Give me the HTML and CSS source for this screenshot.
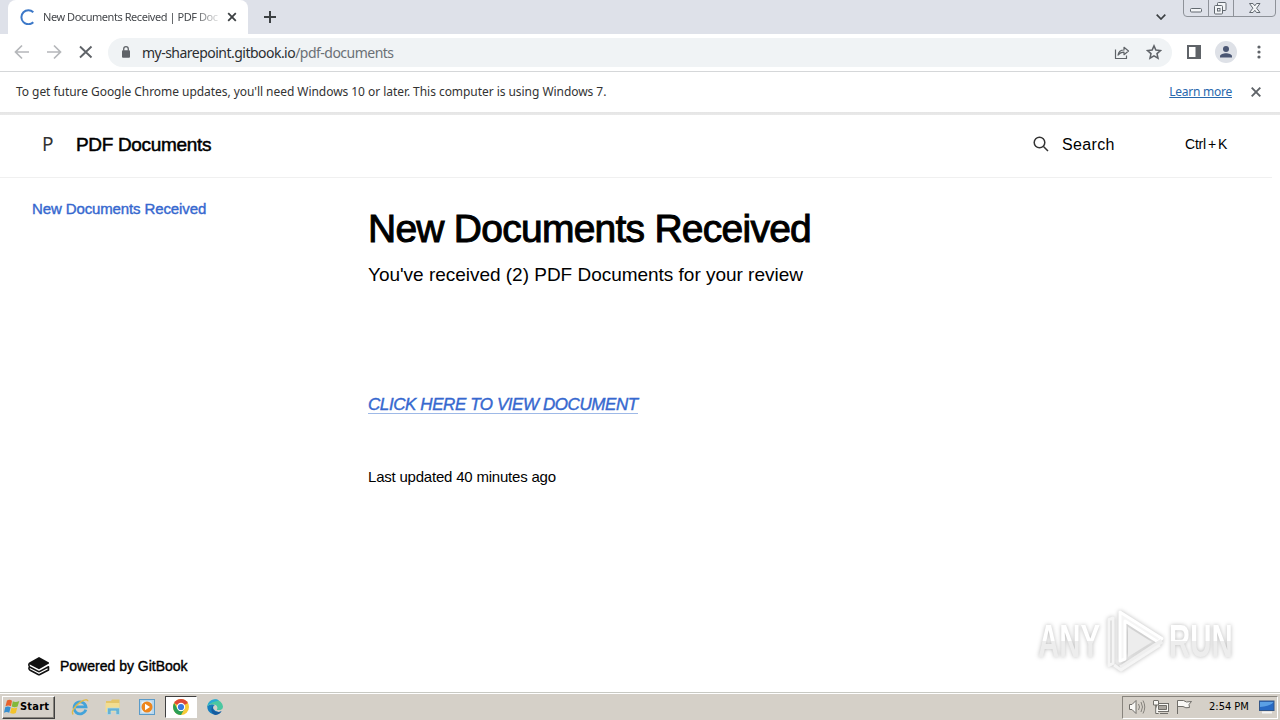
FILE: index.html
```html
<!DOCTYPE html>
<html lang="en">
<head>
<meta charset="utf-8">
<title>New Documents Received | PDF Documents</title>
<link rel="stylesheet" href="styles.css">
</head>
<body>
<div class="screen">
  <header class="tabstrip">
    <div class="tab">
      <svg class="spinner" width="16" height="16" viewBox="0 0 16 16"><path d="M13.3 3.2A7 7 0 1 0 13.3 13.2" fill="none" stroke="#3c78c8" stroke-width="2"/></svg>
      <span class="tab-title">New Documents Received | PDF Doc</span>
      <svg class="tab-close" width="10" height="10" viewBox="0 0 10 10"><path d="M1.2 1.2l7.6 7.6M8.8 1.2L1.2 8.8" stroke="#3c4043" stroke-width="1.8"/></svg>
    </div>
    <svg class="new-tab" width="12" height="12" viewBox="0 0 12 12"><path d="M6 0v12M0 6h12" stroke="#3c4043" stroke-width="2"/></svg>
    <svg class="tab-search" width="10" height="6" viewBox="0 0 10 6"><path d="M.7 .7L5 5 9.300.7" fill="none" stroke="#3c4043" stroke-width="1.7"/></svg>
    <svg class="window-buttons" width="93" height="17" viewBox="0 0 93 17">
      <path d="M.5 0v13q0 3.500 3.500 3.500h85q3.500 0 3.500-3.500V0M25.500 0v16M50.500 0v16" fill="none" stroke="#8e9299"/>
      <g fill="#f3f5f7" stroke="#626970"><rect x="7.500" y="8.500" width="11" height="3.500" rx="1"/><rect x="34.500" y="2.500" width="8.500" height="8" rx="1"/><rect x="31.500" y="5.500" width="8" height="8.500" rx="1"/><rect x="34.500" y="8.500" width="2.500" height="2.500"/>
      <path d="M66.500 3.500h3.500l1.800 2.300 1.700-2.300h3.500l-3.400 4.700 3.400 4.300h-3.500l-1.700-2.200-1.800 2.200h-3.500l3.400-4.300z"/></g>
    </svg>
  </header>

  <div class="toolbar">
    <svg class="nav" width="80" height="16" viewBox="0 0 80 16"><g fill="none" stroke-width="1.700"><path d="M15 8H2M8 1.500L1.500 8 8 14.500M33 8h13M40 1.500L46.500 8 40 14.500" stroke="#b5b7ba"/><path d="M66 2.500l11.500 11M77.500 2.500L66 13.500" stroke="#5f6368" stroke-width="1.900"/></g></svg>
    <div class="omnibox">
      <svg class="lock" width="10" height="12" viewBox="0 0 10 12"><rect x="1" y="4.300" width="8" height="7.500" rx="1" fill="#5f6368"/><path d="M2.700 4.800V3a2.300 2.300 0 0 1 4.600 0v1.800" fill="none" stroke="#5f6368" stroke-width="1.300"/></svg>
      <span class="url">my-sharepoint.gitbook.io<span class="url-path">/pdf-documents</span></span>
      <svg class="share" width="16" height="15" viewBox="0 0 16 15"><path d="M1.500 4.500v9h11v-3M4 10c.7-3.700 2.800-5 6-5V2.300L14.500 6 10 9.700V7.200C7.400 7.200 5.700 7.900 4 10z" fill="none" stroke="#5f6368" stroke-width="1.200" stroke-linejoin="round"/></svg>
      <svg class="star" width="16" height="16" viewBox="0 0 24 24"><path d="M12 2.800l2.800 6.300 6.900.7-5.200 4.600 1.500 6.800-6-3.500-6 3.500 1.500-6.800-5.200-4.600 6.900-.7z" fill="none" stroke="#5f6368" stroke-width="2.300"/></svg>
    </div>
    <svg class="panel" width="14" height="14" viewBox="0 0 14 14"><path d="M0 0h14v14H0zM2 2v10h6.500V2z" fill="#5f6368" fill-rule="evenodd"/></svg>
    <svg class="profile" width="22" height="22" viewBox="0 0 22 22"><circle cx="11" cy="11" r="11" fill="#dee1e7"/><circle cx="11" cy="8" r="3" fill="#4a5673"/><path d="M5 16.500v-1.300c0-2 3.500-3 6-3s6 1 6 3v1.300z" fill="#4a5673"/></svg>
    <svg class="more" width="4" height="14" viewBox="0 0 4 14"><g fill="#5f6368"><circle cx="2" cy="2" r="1.600"/><circle cx="2" cy="7" r="1.600"/><circle cx="2" cy="12" r="1.600"/></g></svg>
  </div>

  <div class="infobar">
    <span class="notice">To get future Google Chrome updates, you'll need Windows 10 or later. This computer is using Windows 7.</span>
    <a class="learn">Learn more</a>
    <svg class="dismiss" width="10" height="10" viewBox="0 0 10 10"><path d="M.7 .7l8.600 8.600M9.300.7L.7 9.300" stroke="#5f6368" stroke-width="1.900"/></svg>
  </div>

  <main class="page">
    <div class="site-header">
      <span class="site-icon">P</span>
      <span class="site-title">PDF Documents</span>
      <svg class="search-icon" width="16" height="16" viewBox="0 0 16 16"><circle cx="6.500" cy="6.500" r="5.300" fill="none" stroke="#333" stroke-width="1.500"/><path d="M10.500 10.500l4.500 4.500" stroke="#333" stroke-width="1.500"/></svg>
      <span class="search-label">Search</span>
      <span class="shortcut">Ctrl<span class="plus">+</span>K</span>
    </div>
    <div class="body">
      <nav class="sidebar">
        <a class="side-link">New Documents Received</a>
        <div class="powered">
          <svg width="22" height="20" viewBox="0 0 22 20"><path d="M.8 6.800L11 1l10 5.500v1L11 13.300.8 8z" fill="#111"/><path d="M1.200 7.500c-.8 2-.2 3 1 3.700l8 4.200q.8.400 1.600 0l8.700-4.600v3.200l-8.700 4.500q-.8.400-1.600 0l-8-4.200c-1.300-.8-1.600-2-.8-3.200" fill="none" stroke="#111" stroke-width="1.600" stroke-linejoin="round"/></svg>
          <span class="powered-text">Powered by GitBook</span>
        </div>
      </nav>
      <article class="content">
        <h1 class="title">New Documents Received</h1>
        <p class="lead">You've received (2) PDF Documents for your review</p>
        <a class="cta">CLICK HERE TO VIEW DOCUMENT</a>
        <p class="updated">Last updated 40 minutes ago</p>
      </article>
    </div>
    <div class="watermark">
      <span class="mark-text mark-any">ANY</span>
      <svg class="mark-logo" width="62" height="68" viewBox="0 0 62 68"><g fill="#f5f5f5" stroke="#fff" stroke-width="3" stroke-linejoin="round"><path d="M16 5l42 26.500-4 3.500L21 14v38l-5 2z"/><path d="M24 20l24 15-24 15z" fill="#ededed" stroke="none"/><path d="M58 34L19 59.500l-3 1" fill="none" stroke="#efefef" stroke-width="5"/><path d="M5 12.500v46l4-2V11zM10 58l7 5L56 38" fill="none" stroke="#f5f5f5"/></g></svg>
      <span class="mark-text mark-run">RUN</span>
    </div>
  </main>

  <footer class="taskbar">
    <div class="start">
      <svg width="16" height="16" viewBox="0 0 16 16"><path d="M3 1.500q2.500-1.500 5 .2L7 7.300q-2.500-1.500-5.500 0z" fill="#e8622c"/><path d="M8.800 2.200q2.700 1.500 6.500-.3l-1.700 5.600q-3 1.500-5.800 0z" fill="#83b83b"/><path d="M1.200 8.200q2.500-1.500 5.500 0l-1.500 5.500q-2.500-1.400-5.200 0z" fill="#388fd0"/><path d="M7.500 8.500q2.500 1.500 5.800.1l-1.500 5.500q-2.700 1.500-5.700-.1z" fill="#f3c32b"/></svg>
      <span class="start-text">Start</span>
    </div>
    <svg class="ie" width="18" height="18" viewBox="0 0 18 18"><path d="M14.800 11.700A6 6 0 1 1 15 8.900H5" fill="none" stroke="#43a3da" stroke-width="2.800"/><path d="M2.200 16.500C-.3 14 3.800 8 9 4.400c4-2.800 7.800-3.500 7.900-1.200" fill="none" stroke="#e0ba49" stroke-width="1.400"/></svg>
    <svg class="folder" width="18" height="18" viewBox="0 0 18 18"><path d="M2 3h5l1-1.500h7.500V14H2z" fill="#e4c568"/><path d="M1.500 5h14v9h-14z" fill="#f2dd91"/><path d="M3.500 16.500V10h12v6.500H12v-3.500H7v3.500z" fill="#67b2d4" stroke="#b7dce8" stroke-width=".7"/></svg>
    <svg class="media" width="16" height="16" viewBox="0 0 16 16"><rect x=".5" y=".5" width="15" height="15" fill="#b9d7ec" stroke="#5a9bc9"/><rect x="2.500" y="2.500" width="10" height="11" fill="#e9f4fa"/><circle cx="8" cy="8" r="5.500" fill="#ed861d"/><path d="M6 4.700l5 3.300-5 3.300z" fill="#fff"/></svg>
    <div class="task-active">
      <svg width="16" height="16" viewBox="0 0 16 16"><circle cx="8" cy="8" r="8" fill="#f7cb38"/><path d="M8 8L1.100 4A8 8 0 0 1 14.900 4z" fill="#de4938"/><path d="M1.100 4A8 8 0 0 0 8 16l3.400-6L8 8 4.600 10z" fill="#2b9f56"/><circle cx="8" cy="8" r="4.200" fill="#fff"/><circle cx="8" cy="8" r="3.100" fill="#3979e0"/></svg>
    </div>
    <svg class="edge" width="16" height="16" viewBox="0 0 16 16"><path d="M.3 7A8 8 0 0 0 14.500 12.500Q9 14 6.500 10C5 7 8 6 8 6Q4 4 .3 7z" fill="#167dbd"/><path d="M.3 6.500A8 8 0 0 1 16 7.500c0 3-2.500 4-5.700 3.500-1-.5.300-1 .1-2.600C10 4.900 4 4 .3 7z" fill="#4bc7a1"/><path d="M.3 7A7.800 7.800 0 0 1 8 .2c2 0 3 .5 4 1.300C8 2 3 4 .3 7z" fill="#2aa9d5"/><path d="M6.500 6.500c-2 3 .5 6.500 4.500 6.500 1.500 0 2.500-.4 3.700-1.100a8 8 0 0 1-6 4C4 15.300 3 9 6.500 6.500z" fill="#165b9f"/></svg>
    <div class="tray">
      <svg class="tray-icons" width="65" height="16" viewBox="0 0 65 16"><g fill="#f9f8f5" stroke="#706e69"><path d="M.5 5.500h2.500l4-4v13l-4-4H.5z"/><path d="M9.500 5q2 3 0 6M12 3q3 5 0 10M14 1.500q3.500 6.500 0 13" fill="none" stroke="#85827c"/><rect x="27.500" y="4.500" width="12" height="8"/><path d="M29.500 6.500h8v4h-8z" fill="#aaa69f"/><path d="M31 14.500h8M24.500 2v4h5V2M26.700 6v8.500h3M24.500 1.500h5"/><path d="M48.500 15V1.500h6q2 2.500 8 1l-2.500 3 .5 3q-4 1-6.500-1h-5.500"/></g></svg>
      <span class="clock">2:54 PM</span>
      <svg class="desktop" width="16" height="14" viewBox="0 0 16 14"><rect x=".5" y="1" width="14.500" height="9.500" fill="#286ac4" stroke="#345788"/><path d="M1 2h13.500Q12 6 1 7z" fill="#5ba0e5"/><path d="M3 12.500h10" stroke="#f4f4f4" stroke-width="2"/></svg>
    </div>
  </footer>
</div>
</body>
</html>
```
FILE: styles.css
```css
* { box-sizing: border-box; }
body { margin: 0; font-family: "Liberation Sans", Arial, sans-serif; color: #000; background: #fff; }
svg { display: block; flex: none; }
span, a, h1, p { white-space: nowrap; }
.screen { width: 1280px; height: 720px; display: flex; flex-direction: column; overflow: hidden; }

.tabstrip { height: 34px; flex: none; display: flex; background: #dee1e9; }
.tab { width: 240px; height: 34px; margin-left: 8px; padding: 0 11px 0 12px; display: flex; align-items: center; background: #fff; border-radius: 8px 8px 0 0; }
.tab-title { width: 177px; margin-left: 7px; font: 11px/16px "Noto Sans", sans-serif; color: #45484c; letter-spacing: -.45px; -webkit-mask-image: linear-gradient(to right, #000 150px, transparent 180px); mask-image: linear-gradient(to right, #000 150px, transparent 180px); }
.tab-close { margin-left: auto; }
.new-tab { margin: 11px 0 0 16px; }
.tab-search { margin: 14px 17px 0 auto; }
.window-buttons { margin-right: 4px; }

.toolbar { height: 38px; flex: none; display: flex; align-items: center; padding: 0 0 1px 14px; border-bottom: 1px solid #d5d7d9; }
.omnibox { width: 1064px; height: 29px; margin-left: 14px; padding: 0 10px 0 13px; display: flex; align-items: center; background: #f0f3f5; border-radius: 15px; }
.url { margin-left: 11px; padding-top: 1px; font: 14px/20px "Noto Sans", sans-serif; color: #2c2e31; letter-spacing: -.52px; }
.url-path { color: #6b7075; }
.share { margin-left: auto; }
.star { margin-left: 16px; }
.panel { margin-left: 15px; }
.profile { margin-left: 14px; }
.more { margin-left: 20px; }

.infobar { height: 43px; flex: none; display: flex; align-items: center; padding: 0 19px 0 16px; border-bottom: 3px solid #ccc; border-image: linear-gradient(#b0b0b0, #e9e9e9) 3; font: 12px/18px "Noto Sans", sans-serif; color: #333; }
.notice { letter-spacing: -.05px; }
.learn { margin-left: auto; color: #2868ad; text-decoration: underline; letter-spacing: -.25px; }
.dismiss { margin-left: 19px; }

.page { position: relative; flex: 1; min-height: 0; display: flex; flex-direction: column; }
.site-header { width: 1272px; height: 63px; flex: none; display: flex; align-items: center; padding: 0 45px 4px 42px; border-bottom: 1px solid #f0f0f0; }
.site-icon { width: 12px; font: 19px/24px "Noto Sans", sans-serif; color: #333; }
.site-title { margin-left: 22px; padding-top: 1px; font-size: 19px; letter-spacing: -.33px; -webkit-text-stroke: .5px #000; }
.search-icon { margin-left: auto; }
.search-label { width: 53px; margin-left: 13px; padding-top: 1px; font-size: 16px; letter-spacing: .35px; }
.shortcut { width: 42px; margin-left: 70px; font-size: 14px; letter-spacing: -.2px; }
.plus { margin: 0 2px; }
.body { flex: 1; display: flex; }
.sidebar { width: 368px; padding: 22px 0 16px 28px; display: flex; flex-direction: column; }
.side-link { width: max-content; margin-left: 4px; font-size: 15px; line-height: 18px; letter-spacing: -.12px; color: #3668cf; -webkit-text-stroke: .4px #3668cf; }
.powered { margin-top: auto; display: flex; align-items: center; font-size: 14px; }
.powered-text { margin-left: 10px; -webkit-text-stroke: .4px #000; }
.content { display: flex; flex-direction: column; align-items: flex-start; }
.title { margin: 28px 0 0; font-size: 39px; line-height: 46px; font-weight: 400; letter-spacing: -.75px; -webkit-text-stroke: 1px #000; }
.lead { margin: 12px 0 0; font-size: 19px; line-height: 22px; letter-spacing: -.02px; }
.cta { margin-top: 108px; height: 20px; font-size: 17px; line-height: 22px; font-style: italic; letter-spacing: -.42px; color: #3668cf; border-bottom: 1px solid #9eb9e7; -webkit-text-stroke: .4px #3668cf; }
.updated { margin: 54px 0 0; font-size: 15px; line-height: 18px; letter-spacing: -.21px; }

.watermark { position: absolute; left: 1038px; top: 490px; width: 200px; height: 72px; display: flex; align-items: center; filter: drop-shadow(0 0 2px #bbb); }
.mark-text { width: 63px; font: 700 46px/60px "Liberation Sans", sans-serif; transform-origin: 0 50%; color: transparent; background: linear-gradient(#fff 50%, #ededed 50%); -webkit-background-clip: text; background-clip: text; }
.mark-text { width: auto; min-width: 98px; margin-right: -35px; }
.mark-any { transform: scaleX(.64); }
.mark-logo { margin-left: 3px; }
.mark-run { margin-left: 3px; transform: scaleX(.64); }

.taskbar { height: 28px; flex: none; display: flex; align-items: center; padding-top: 1px; background: #d5d0c8; border-top: 1px solid #c8c9c3; box-shadow: inset 0 1px #fff; }
.start { width: 53px; height: 23px; margin-left: 2px; padding-left: 1px; display: flex; align-items: center; border: 1px solid; border-color: #fff #404040 #404040 #fff; box-shadow: inset -1px -1px #88847d; }
.start-text { font: 700 11px/16px "DejaVu Sans Condensed", "DejaVu Sans", sans-serif; letter-spacing: .2px; }
.ie { margin-left: 16px; }
.folder { margin-left: 15px; }
.media { margin-left: 17px; }
.task-active { width: 32px; height: 22px; margin-left: 10px; padding: 2px 0 0 7px; background: #fff; border: 1px solid; border-color: #404040 #fff #fff #404040; }
.edge { margin-left: 10px; }
.tray { width: 156px; height: 23px; margin: 0 2px 0 auto; padding: 0 2px 0 6px; display: flex; align-items: center; border: 1px solid; border-color: #88847d #fff #fff #88847d; }
.clock { margin-left: 15px; font: 11px/16px "DejaVu Sans Condensed", "DejaVu Sans", sans-serif; }
.desktop { margin-left: auto; }
```
